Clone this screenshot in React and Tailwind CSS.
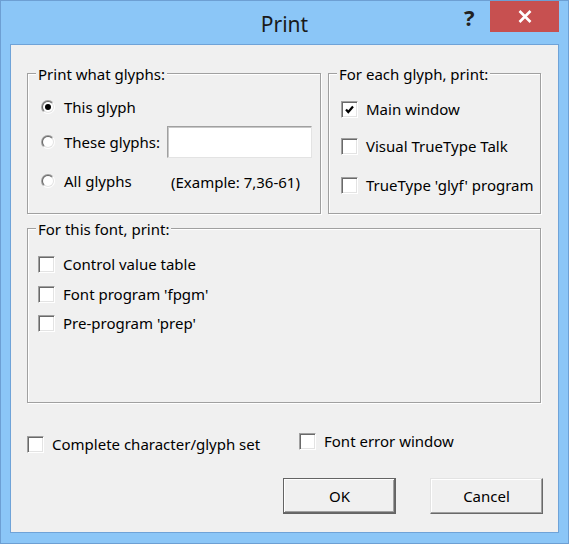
import React from "react";

const Check = ({ checked }) => (
  <div className="w-[17px] h-[17px] shrink-0 bg-white border border-t-[#a0a0a0] border-l-[#a0a0a0] border-r-white border-b-white shadow-[inset_1px_1px_0_#696969,inset_-1px_-1px_0_#e3e3e3] flex items-center justify-center">
    {checked && (
      <svg width="11" height="11" viewBox="0 0 11 11">
        <path d="M2 5.5 L4.3 8 L9 2.5" fill="none" stroke="#000" strokeWidth="2.2" />
      </svg>
    )}
  </div>
);

const Radio = ({ checked }) => (
  <svg width="14" height="14" viewBox="0 0 14 14" className="shrink-0">
    <defs>
      <linearGradient id="ro" x1="0" y1="0" x2="1" y2="1">
        <stop offset="0.45" stopColor="#a0a0a0" />
        <stop offset="0.55" stopColor="#ffffff" />
      </linearGradient>
      <linearGradient id="ri" x1="0" y1="0" x2="1" y2="1">
        <stop offset="0.45" stopColor="#696969" />
        <stop offset="0.55" stopColor="#e3e3e3" />
      </linearGradient>
    </defs>
    <circle cx="7" cy="7" r="7" fill="url(#ro)" />
    <circle cx="7" cy="7" r="6" fill="url(#ri)" />
    <circle cx="7" cy="7" r="5" fill="#ffffff" />
    {checked && <circle cx="7" cy="7" r="3" fill="#000" />}
  </svg>
);

const Group = ({ label, className, children }) => (
  <div className={`relative border border-[#a0a0a0] shadow-[inset_1px_1px_0_#fff,1px_1px_0_#fff] ${className}`}>
    <div className="absolute -top-[10px] left-[8px] px-[2px] bg-[#f0f0f0] leading-[20px] whitespace-nowrap">
      {label}
    </div>
    {children}
  </div>
);

const CheckRow = ({ checked, label, className = "" }) => (
  <div className={`flex items-center h-[22px] ${className}`}>
    <Check checked={checked} />
    <span className="ml-[8px] leading-[20px] whitespace-nowrap">{label}</span>
  </div>
);

export default function App() {
  return (
    <div className="w-[569px] h-[544px] bg-[#8bc6f7] border border-[#6d9fd3] flex flex-col px-[9px] pb-[10px] font-['Noto_Sans',sans-serif] text-[15px] text-black">
      {/* title bar */}
      <div className="h-[43px] shrink-0 flex items-start">
        <div className="w-[95px]" />
        <div className="flex-1 text-center text-[21px] leading-none pt-[13px] text-[#1a1a1a]">Print</div>
        <div className="w-[95px] flex items-start">
          <div className="w-[26px] pt-[5px] font-bold text-[22px] leading-none text-[#222]">?</div>
          <div className="w-[69px] h-[31px] bg-[#c75050] flex items-center justify-center">
            <svg width="14" height="13" viewBox="0 0 14 13">
              <path d="M1.5 1 L12.5 12 M12.5 1 L1.5 12" stroke="#fff" strokeWidth="2.6" />
            </svg>
          </div>
        </div>
      </div>

      {/* client */}
      <div className="flex-1 bg-[#f0f0f0] border border-[#6fa3d8] flex flex-col pl-[16px] pr-[15px]">
        <div className="flex gap-[7px] mt-[28px] pr-[2px]">
          <Group label="Print what glyphs:" className="w-[294px] h-[141px]">
            <div className="flex flex-col pl-[13px] pr-[8px] pt-[18px]">
              <div className="flex items-center h-[30px]">
                <Radio checked />
                <span className="ml-[9px]">This glyph</span>
              </div>
              <div className="flex items-center h-[32px] mt-[4px]">
                <Radio />
                <span className="ml-[9px] w-[103px] whitespace-nowrap">These glyphs:</span>
                <div className="w-[145px] h-[32px] bg-white border border-t-[#a0a0a0] border-l-[#a0a0a0] border-r-[#e3e3e3] border-b-[#e3e3e3] shadow-[inset_1px_1px_0_#c8c8c8]" />
              </div>
              <div className="flex items-center h-[30px] mt-[8px]">
                <Radio />
                <span className="ml-[9px] w-[103px] whitespace-nowrap">All glyphs</span>
                <span className="ml-[4px] mt-[3px] whitespace-nowrap">(Example: 7,36-61)</span>
              </div>
            </div>
          </Group>
          <Group label="For each glyph, print:" className="flex-1 h-[141px]">
            <div className="flex flex-col pl-[12px] pt-[24px]">
              <CheckRow checked label="Main window" />
              <CheckRow label="Visual TrueType Talk" className="mt-[15px]" />
              <CheckRow label="TrueType 'glyf' program" className="mt-[17px]" />
            </div>
          </Group>
        </div>

        <Group label="For this font, print:" className="h-[175px] mt-[14px] mr-[2px]">
          <div className="flex flex-col pl-[10px] pt-[24px]">
            <CheckRow label="Control value table" />
            <CheckRow label="Font program 'fpgm'" className="mt-[8px]" />
            <CheckRow label="Pre-program 'prep'" className="mt-[7px]" />
          </div>
        </Group>

        <div className="flex items-start mt-[27px] h-[24px]">
          <CheckRow label="Complete character/glyph set" className="w-[272px] mt-[3px]" />
          <CheckRow label="Font error window" />
        </div>

        <div className="flex justify-end gap-[34px] mt-[24px]">
          <button className="w-[113px] h-[36px] bg-[#f0f0f0] border border-[#646464] shadow-[inset_-1px_-1px_0_#696969,inset_1px_1px_0_#fff,inset_-2px_-2px_0_#a0a0a0]">
            OK
          </button>
          <button className="w-[113px] h-[36px] bg-[#f0f0f0] border border-t-[#e3e3e3] border-l-[#e3e3e3] border-r-[#696969] border-b-[#696969] shadow-[inset_-1px_-1px_0_#a0a0a0,inset_1px_1px_0_#fff]">
            Cancel
          </button>
        </div>
      </div>
    </div>
  );
}
